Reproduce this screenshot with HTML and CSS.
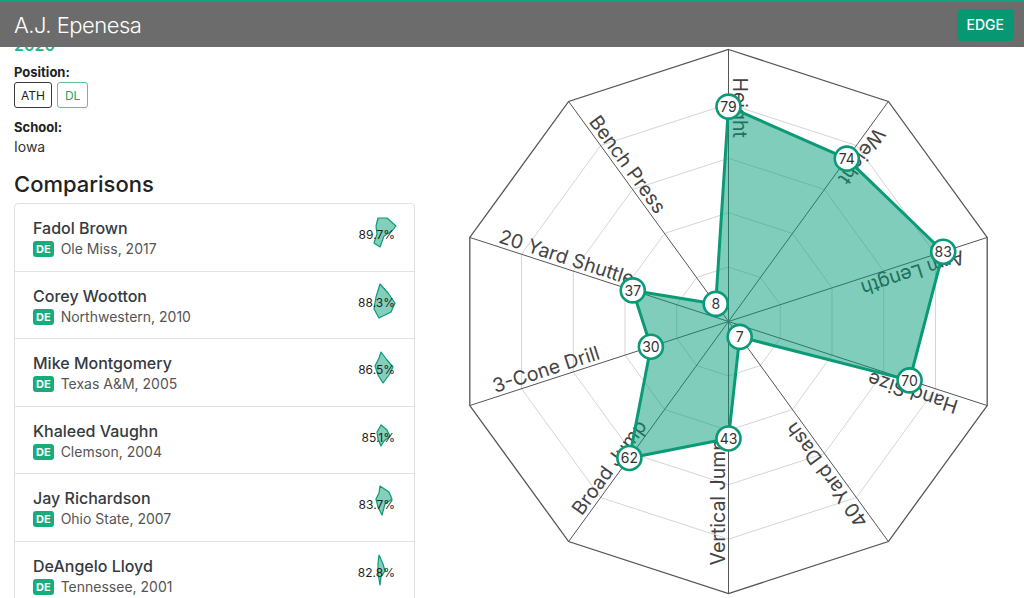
FILE: index.html
```html
<!DOCTYPE html>
<html lang="en">
<head>
<meta charset="utf-8">
<title>A.J. Epenesa</title>
<link rel="stylesheet" href="styles.css">
</head>
<body>
<header class="topbar">
  <h1 class="title">A.J. Epenesa</h1>
  <button class="edge-btn">EDGE</button>
</header>
<main class="page">
  <section class="profile">
    <div class="year">2020</div>
    <div class="field-label">Position:</div>
    <div class="positions"><span class="pos pos-ath">ATH</span><span class="pos pos-dl">DL</span></div>
    <div class="field-label school-label">School:</div>
    <div class="field-value">Iowa</div>
    <h2 class="section-title">Comparisons</h2>
    <ul class="comp-list">
      <li class="comp-item">
        <div class="comp-info">
          <div class="comp-name">Fadol Brown</div>
          <div class="comp-meta"><span class="pos-badge">DE</span>Ole Miss, 2017</div>
        </div>
        <div class="mini">
          <svg class="mini-chart" viewBox="0 0 36 34"><polygon points="19,1 28,1 37,9 33,14 25,19 21,30 15,26 18,17 17,9"/></svg>
          <span class="mini-pct">89.7%</span>
        </div>
      </li>
      <li class="comp-item">
        <div class="comp-info">
          <div class="comp-name">Corey Wootton</div>
          <div class="comp-meta"><span class="pos-badge">DE</span>Northwestern, 2010</div>
        </div>
        <div class="mini">
          <svg class="mini-chart" viewBox="0 0 36 34"><polygon points="21,-1 29,8 36,18 32,27 20,33 15,24 17,12"/></svg>
          <span class="mini-pct">88.3%</span>
        </div>
      </li>
      <li class="comp-item">
        <div class="comp-info">
          <div class="comp-name">Mike Montgomery</div>
          <div class="comp-meta"><span class="pos-badge">DE</span>Texas A&amp;M, 2005</div>
        </div>
        <div class="mini">
          <svg class="mini-chart" viewBox="0 0 36 34"><polygon points="22,0 28,8 34,15 30,23 24,31 19,23 16,14 20,6"/></svg>
          <span class="mini-pct">86.5%</span>
        </div>
      </li>
      <li class="comp-item">
        <div class="comp-info">
          <div class="comp-name">Khaleed Vaughn</div>
          <div class="comp-meta"><span class="pos-badge">DE</span>Clemson, 2004</div>
        </div>
        <div class="mini">
          <svg class="mini-chart" viewBox="0 0 36 34"><polygon points="22,5 28,10 31,16 25,21 22,26 19,19 18,12"/></svg>
          <span class="mini-pct">85.1%</span>
        </div>
      </li>
      <li class="comp-item">
        <div class="comp-info">
          <div class="comp-name">Jay Richardson</div>
          <div class="comp-meta"><span class="pos-badge">DE</span>Ohio State, 2007</div>
        </div>
        <div class="mini">
          <svg class="mini-chart" viewBox="0 0 36 34"><polygon points="21,-1 30,5 33,12 26,17 23,28 19,20 17,12 20,6"/></svg>
          <span class="mini-pct">83.7%</span>
        </div>
      </li>
      <li class="comp-item">
        <div class="comp-info">
          <div class="comp-name">DeAngelo Lloyd</div>
          <div class="comp-meta"><span class="pos-badge">DE</span>Tennessee, 2001</div>
        </div>
        <div class="mini">
          <svg class="mini-chart" viewBox="0 0 36 34"><polygon points="20,0 24,9 26,16 22,22 21,30 19,18 19,9"/></svg>
          <span class="mini-pct">82.8%</span>
        </div>
      </li>
    </ul>
  </section>
  <section class="chart-col">
    <svg class="radar" viewBox="447 33 563 565" width="563" height="565">
      <g transform="translate(728.5 321.5)">
        <g class="rings">
          <polygon points="0,-54.4 31.98,-44.01 51.74,-16.81 51.74,16.81 31.98,44.01 0,54.4 -31.98,44.01 -51.74,16.81 -51.74,-16.81 -31.98,-44.01"/>
          <polygon points="0,-108.8 63.95,-88.02 103.48,-33.62 103.48,33.62 63.95,88.02 0,108.8 -63.95,88.02 -103.48,33.62 -103.48,-33.62 -63.95,-88.02"/>
          <polygon points="0,-163.2 95.93,-132.03 155.22,-50.43 155.22,50.43 95.93,132.03 0,163.2 -95.93,132.03 -155.22,50.43 -155.22,-50.43 -95.93,-132.03"/>
          <polygon points="0,-217.6 127.91,-176.04 206.96,-67.24 206.96,67.24 127.91,176.04 0,217.6 -127.91,176.04 -206.96,67.24 -206.96,-67.24 -127.91,-176.04"/>
        </g>
        <polygon class="outer-ring" points="0,-272 159.88,-220.05 258.7,-84.05 258.7,84.05 159.88,220.05 0,272 -159.88,220.05 -258.7,84.05 -258.7,-84.05 -159.88,-220.05"/>
        <g class="axes">
          <line x1="0" y1="0" x2="0" y2="-272"/>
          <line x1="0" y1="0" x2="159.88" y2="-220.05"/>
          <line x1="0" y1="0" x2="258.7" y2="-84.05"/>
          <line x1="0" y1="0" x2="258.7" y2="84.05"/>
          <line x1="0" y1="0" x2="159.88" y2="220.05"/>
          <line x1="0" y1="0" x2="0" y2="272"/>
          <line x1="0" y1="0" x2="-159.88" y2="220.05"/>
          <line x1="0" y1="0" x2="-258.7" y2="84.05"/>
          <line x1="0" y1="0" x2="-258.7" y2="-84.05"/>
          <line x1="0" y1="0" x2="-159.88" y2="-220.05"/>
        </g>
        <g class="axis-labels">
          <text transform="rotate(90)" x="-244" y="-4">Height</text>
          <text transform="rotate(126)" x="-244" y="-4">Weight</text>
          <text transform="rotate(162)" x="-244" y="-4">Arm Length</text>
          <text transform="rotate(198)" x="-244" y="-4">Hand Size</text>
          <text transform="rotate(234)" x="-244" y="-4">40 Yard Dash</text>
          <text transform="rotate(270)" x="-244" y="-4">Vertical Jump</text>
          <text transform="rotate(306)" x="-244" y="-4">Broad Jump</text>
          <text transform="rotate(342)" x="-244" y="-4">3-Cone Drill</text>
          <text transform="rotate(18)" x="-244" y="-4">20 Yard Shuttle</text>
          <text transform="rotate(54)" x="-244" y="-4">Bench Press</text>
        </g>
        <polygon class="data-area" points="0,-214.88 118.31,-162.84 214.72,-69.76 181.09,58.83 11.19,15.4 0,116.96 -99.13,136.43 -77.61,25.21 -95.72,-31.1 -12.79,-17.6"/>
        <g class="points">
          <g transform="translate(0 -214.88)"><circle r="12"/><text>79</text></g>
          <g transform="translate(118.31 -162.84)"><circle r="12"/><text>74</text></g>
          <g transform="translate(214.72 -69.76)"><circle r="12"/><text>83</text></g>
          <g transform="translate(181.09 58.83)"><circle r="12"/><text>70</text></g>
          <g transform="translate(11.19 15.4)"><circle r="12"/><text>7</text></g>
          <g transform="translate(0 116.96)"><circle r="12"/><text>43</text></g>
          <g transform="translate(-99.13 136.43)"><circle r="12"/><text>62</text></g>
          <g transform="translate(-77.61 25.21)"><circle r="12"/><text>30</text></g>
          <g transform="translate(-95.72 -31.1)"><circle r="12"/><text>37</text></g>
          <g transform="translate(-12.79 -17.6)"><circle r="12"/><text>8</text></g>
        </g>
      </g>
    </svg>
  </section>
</main>
</body>
</html>
```
FILE: styles.css
```css
html, body {
  margin: 0;
  padding: 0;
  overflow: hidden;
  background: #ffffff;
}

body {
  font-family: "Inter", "Noto Sans", "Liberation Sans", sans-serif;
  color: #333;
}

.topbar {
  position: fixed;
  top: 0;
  left: 0;
  right: 0;
  height: 45px;
  border-top: 2px solid #13a37c;
  background: #6c6c6c;
  display: flex;
  align-items: center;
  justify-content: space-between;
  padding: 0 10px 0 14px;
  z-index: 10;
}

.title {
  margin: 0;
  font-size: 22px;
  font-weight: 300;
  color: #ffffff;
  letter-spacing: -0.5px;
}

.edge-btn {
  height: 32px;
  padding: 0 10px;
  border: none;
  border-radius: 4px;
  background: #079873;
  color: #ffffff;
  font-family: inherit;
  font-size: 14px;
  font-weight: 500;
}

.page {
  display: grid;
  grid-template-columns: 401px 563px;
  column-gap: 32px;
  padding: 33px 14px 0;
}

.year {
  font-size: 16px;
  line-height: 24px;
  font-weight: 600;
  color: #1fb587;
}

.field-label {
  margin-top: 5px;
  font-size: 13px;
  line-height: 20px;
  font-weight: 700;
  color: #222;
}

.school-label {
  margin-top: 9px;
}

.field-value {
  font-size: 14px;
  line-height: 20px;
  color: #333;
}

.positions {
  display: flex;
  gap: 5px;
}

.pos {
  display: inline-flex;
  align-items: center;
  box-sizing: border-box;
  height: 26px;
  padding: 0 6px;
  border: 1px solid #333;
  border-radius: 3px;
  font-size: 12px;
}

.pos-ath {
  border-color: #3a3a3a;
  color: #222;
}

.pos-dl {
  padding: 0 7px;
  border-color: #5cc48e;
  color: #26a65b;
}

.section-title {
  margin: 14px 0 6px;
  font-size: 22px;
  line-height: 26px;
  font-weight: 500;
  color: #222;
}

.comp-list {
  list-style: none;
  margin: 0;
  padding: 0;
  border: 1px solid #e0e0e0;
  border-radius: 4px;
}

.comp-item {
  display: flex;
  align-items: center;
  justify-content: space-between;
  padding: 12px 18px 12px;
  border-bottom: 1px solid #e3e3e3;
}

.comp-name {
  font-size: 16px;
  line-height: 24px;
  font-weight: 500;
  color: #343a40;
}

.comp-meta {
  display: flex;
  align-items: center;
  gap: 7px;
  font-size: 14px;
  line-height: 18.5px;
  color: #555;
}

.pos-badge {
  padding: 0 3px;
  border-radius: 3px;
  background: #17ad7b;
  color: #ffffff;
  font-size: 11px;
  line-height: 16px;
  font-weight: 700;
}

.mini {
  position: relative;
  width: 36px;
  height: 34px;
  margin-right: 1px;
  margin-bottom: 6px;
}

.mini-chart {
  position: absolute;
  left: 0;
  top: 0;
  width: 36px;
  height: 34px;
  overflow: visible;
}

.mini-chart polygon {
  fill: rgba(10, 160, 120, 0.5);
  stroke: #0a9a76;
  stroke-width: 1.2;
  stroke-linejoin: round;
}

.mini-pct {
  position: absolute;
  right: 0;
  top: 50%;
  transform: translateY(-50%);
  font-size: 12px;
  color: #1f1f1f;
}

.chart-col .radar {
  display: block;
  overflow: visible;
}

.rings polygon {
  fill: none;
  stroke: #d5d5d5;
  stroke-width: 1;
}

.outer-ring {
  fill: none;
  stroke: #555;
  stroke-width: 1.3;
}

.axes line {
  stroke: #555;
  stroke-width: 1;
}

.axis-labels text {
  font-family: "Inter", "Noto Sans", sans-serif;
  font-size: 19.5px;
  fill: #444;
}

.data-area {
  fill: rgba(0, 155, 118, 0.5);
  stroke: #0a9a76;
  stroke-width: 3;
  stroke-linejoin: round;
}

.points circle {
  fill: #ffffff;
  stroke: #0a9a76;
  stroke-width: 2.6;
}

.points text {
  font-family: "Inter", "Noto Sans", sans-serif;
  font-size: 14px;
  fill: #333;
  text-anchor: middle;
  dominant-baseline: central;
}
```
